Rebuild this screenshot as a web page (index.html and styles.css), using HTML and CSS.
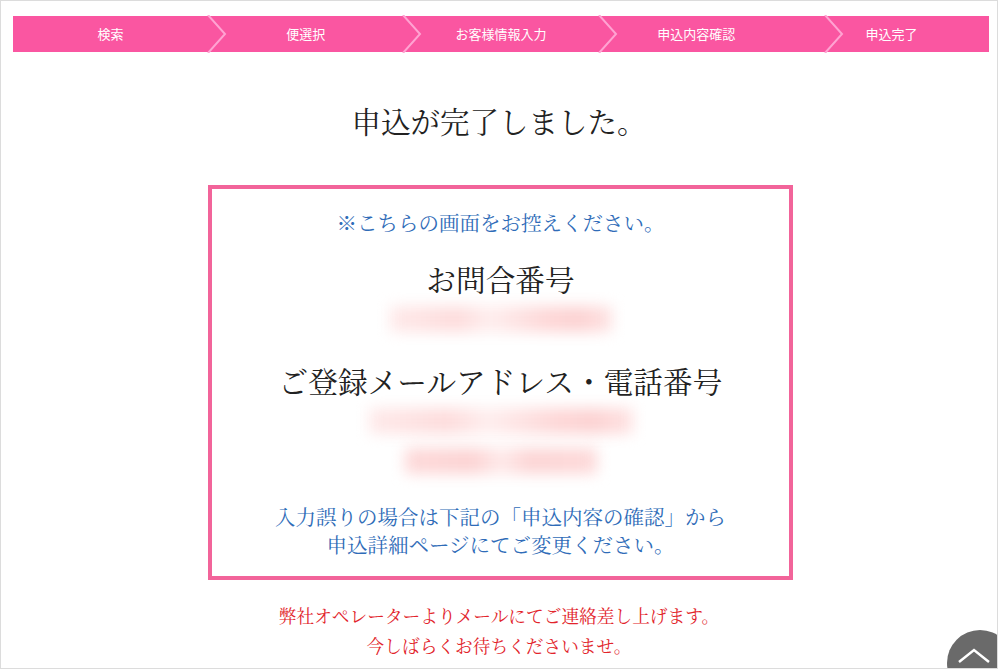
FILE: index.html
```html
<!DOCTYPE html>
<html lang="ja">
<head>
<meta charset="utf-8">
<title>申込完了</title>
<link rel="stylesheet" href="styles.css">
</head>
<body>
<div class="frame">
  <nav class="steps">
    <div class="step">検索<svg class="chev" viewBox="0 0 20 38"><polyline points="1,0 18,19 1,38"/></svg></div>
    <div class="step">便選択<svg class="chev" viewBox="0 0 20 38"><polyline points="1,0 18,19 1,38"/></svg></div>
    <div class="step">お客様情報入力<svg class="chev" viewBox="0 0 20 38"><polyline points="1,0 18,19 1,38"/></svg></div>
    <div class="step">申込内容確認<svg class="chev chev-far" viewBox="0 0 20 38"><polyline points="1,0 18,19 1,38"/></svg></div>
    <div class="step">申込完了</div>
  </nav>

  <h1 class="title">申込が完了しました。</h1>

  <section class="box">
    <p class="note">※こちらの画面をお控えください。</p>
    <h2 class="label">お問合番号</h2>
    <div class="blur blur-1"></div>
    <h2 class="label label-2">ご登録メールアドレス・電話番号</h2>
    <div class="blur blur-2"></div>
    <div class="blur blur-3"></div>
    <p class="info">入力誤りの場合は下記の「申込内容の確認」から<br>申込詳細ページにてご変更ください。</p>
  </section>

  <p class="notice">弊社オペレーターよりメールにてご連絡差し上げます。<br>今しばらくお待ちくださいませ。</p>

  <div class="totop"><svg viewBox="0 0 34 16"><polyline points="2,14 17,2 32,14"/></svg></div>
</div>
</body>
</html>
```

FILE: styles.css
```css
html, body {
  margin: 0;
  padding: 0;
  background: #fff;
}
body {
  font-family: "Noto Serif CJK JP", "Noto Sans CJK JP", serif;
  overflow: hidden;
}
.frame {
  position: relative;
  box-sizing: border-box;
  width: 998px;
  height: 669px;
  border: 1px solid #dcdcdc;
  overflow: hidden;
}
.steps {
  display: flex;
  width: 976px;
  height: 36px;
  margin: 15px 0 0 12px;
  background: #fa56a1;
}
.step {
  position: relative;
  flex: 1;
  text-align: center;
  color: #fff;
  font-family: "Noto Sans CJK JP", sans-serif;
  font-size: 13px;
  line-height: 36px;
}
.chev {
  position: absolute;
  top: -1px;
  right: -19px;
  width: 20px;
  height: 38px;
  z-index: 1;
}
.chev-far {
  right: -50px;
}
.chev polyline {
  fill: none;
  stroke: #ffa3d2;
  stroke-width: 2;
}
.title {
  margin: 48px 0 0;
  text-align: center;
  font-size: 29.5px;
  font-weight: 400;
  line-height: 40px;
  color: #222;
}
.box {
  box-sizing: border-box;
  width: 585px;
  margin: 45px 0 0 207px;
  padding: 19px 0 18px;
  border: 4px solid #f2649a;
  text-align: center;
}
.note {
  margin: 0;
  font-size: 20.5px;
  line-height: 28px;
  color: #2f6cb8;
}
.label {
  margin: 22px 0 0;
  font-size: 29.7px;
  font-weight: 400;
  line-height: 40px;
  color: #222;
}
.label-2 {
  margin-top: 28px;
}
.blur {
  margin: 8px auto 0;
  height: 26px;
  background: linear-gradient(90deg, #feeaea 0%, #fddcdc 30%, #feeeee 45%, #fdd8d8 70%, #fcd2d2 85%, #fee4e4 100%);
  filter: blur(7px);
}
.blur-1 {
  width: 222px;
}
.blur-2 {
  width: 264px;
}
.blur-3 {
  width: 192px;
  height: 26px;
  margin-top: 14px;
  background: linear-gradient(90deg, #fddada 0%, #fcd3d3 35%, #feeaea 50%, #fcd5d5 65%, #fddada 100%);
}
.info {
  margin: 28px 0 0;
  font-size: 20.5px;
  line-height: 28px;
  color: #2f6cb8;
}
.notice {
  margin: 21px 0 0;
  text-align: center;
  font-size: 17.7px;
  line-height: 30px;
  color: #e2242b;
}
.totop {
  position: absolute;
  left: 946px;
  top: 629px;
  width: 66px;
  height: 66px;
  border-radius: 50%;
  background: #6a6a6a;
}
.totop svg {
  position: absolute;
  left: 10px;
  top: 18px;
  width: 34px;
  height: 16px;
}
.totop polyline {
  fill: none;
  stroke: #fff;
  stroke-width: 2.5;
}
```
